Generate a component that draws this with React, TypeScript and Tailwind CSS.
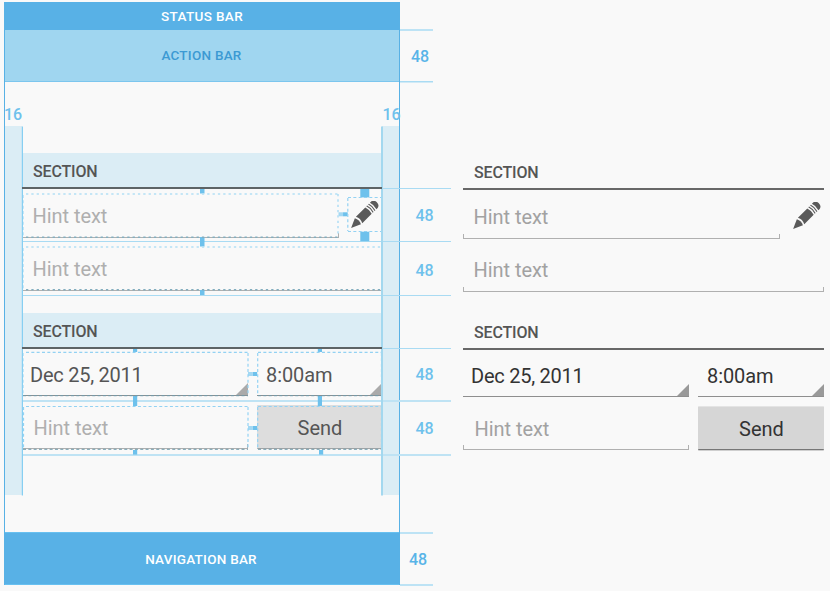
import React from "react";

type FormProps = { spec?: boolean };

function Pencil() {
  return (
    <svg width="28" height="28" viewBox="0 0 28 28" className="block shrink-0">
      <g transform="translate(0.1 27) rotate(-45)" fill="#5a5a5a">
        <path d="M0 0 L9.6 -4.3 Q12 0 9.6 4.3 Z" />
        <path d="M11.3 -4.5 H24.6 Q26.2 0 24.6 4.5 H11.3 Q13.6 0 11.3 -4.5 Z" />
        <path d="M26 -4.6 H27.2 Q28.8 0 27.2 4.6 H26 Q27.6 0 26 -4.6 Z" />
        <path d="M28.6 -4.6 H29.8 Q31.4 0 29.8 4.6 H28.6 Q30.2 0 28.6 -4.6 Z" />
        <path d="M31.2 -4.6 H33 Q36.4 -4 36.4 0 Q36.4 4 33 4.6 H31.2 Q32.8 0 31.2 -4.6 Z" />
      </g>
    </svg>
  );
}

function Header({ spec }: FormProps) {
  return (
    <div
      className={`h-[36px] shrink-0 border-b-2 flex items-center text-[16px] leading-[20px] font-medium tracking-[-0.15px] text-[#555] pl-[11px] pt-[4px] ${
        spec ? "bg-[#dbedf5] border-[#5d6466]" : "border-[#686868]"
      }`}
    >
      SECTION
    </div>
  );
}

function HintField({ spec, className }: FormProps & { className: string }) {
  return (
    <div className={`flex flex-col ${className}`}>
      <div className={`flex-1 text-[20px] leading-[24px] tracking-[-0.05px] ${spec ? "text-[#afafaf]" : "text-[#a2a2a2]"}`}>
        Hint text
      </div>
      <div className="h-[5px] border-x border-b border-[#b0b0b0]" />
    </div>
  );
}

function Spinner({ spec, className, children }: FormProps & { className: string; children: React.ReactNode }) {
  return (
    <div
      className={`flex justify-between items-end border-b pt-[14px] ${
        spec ? "text-[#555] border-[#8b8f91]" : "text-[#333] border-[#8e8e8e]"
      } ${className}`}
    >
      <span className="self-start text-[20px] leading-[24px]">{children}</span>
      <svg width="12" height="12" viewBox="0 0 12 12" className="block">
        <path d="M12 0 V12 H0 Z" fill={spec ? "#aaaaaa" : "#999999"} />
      </svg>
    </div>
  );
}

function Form({ spec }: FormProps) {
  return (
    <div className="w-full flex flex-col">
      <Header spec={spec} />
      <div className="flex justify-between h-[49px]">
        <HintField spec={spec} className="w-[317px] pt-[15px] [&>div:first-child]:pl-[10.5px]" />
        <div className="pt-[12px] pr-[3px]">
          <Pencil />
        </div>
      </div>
      <HintField spec={spec} className="h-[53px] pt-[19px] [&>div:first-child]:pl-[10.5px]" />
      <div className={spec ? "h-[22px]" : "h-[21.5px]"} />
      <Header spec={spec} />
      <div className={spec ? "flex gap-[9px] h-[47px]" : "flex gap-[9px] h-[47.5px]"}>
        <Spinner spec={spec} className="w-[226px] pl-[8px]">
          <span className="tracking-[-0.25px]">Dec 25, 2011</span>
        </Spinner>
        <Spinner spec={spec} className="flex-1 pl-[9px]">
          <span className="tracking-[-0.1px]">8:00am</span>
        </Spinner>
      </div>
      <div className="flex gap-[9px] h-[44px] mt-[9px]">
        <HintField spec={spec} className="w-[226px] pt-[11px] [&>div:first-child]:pl-[11.5px]" />
        <button
          className={`flex-1 flex items-center justify-center rounded-[1px] border-b border-t text-[20px] leading-[24px] pt-[2px] pl-[1px] ${
            spec
              ? "bg-[#dddddd] text-[#555] border-t-[#dddddd] border-b-[#a2a4a5]"
              : "bg-[#d6d6d6] text-[#333] border-t-[#e4e4e4] border-b-[#777777] shadow-[0_1px_0_#cfcfcf]"
          }`}
        >
          Send
        </button>
      </div>
    </div>
  );
}

function Guides() {
  const rows = [188.5, 241.5, 295.5, 348.5];
  const marks = [
    [200, 189, 4.5, 4.5], [200, 237, 4.5, 9.5], [200, 290, 4.5, 5],
    [360.3, 189, 9, 8.4], [360.3, 231.7, 9, 9.5],
    [133, 349, 4.2, 3], [133, 396, 4.2, 10], [133, 450, 4.2, 4.6],
    [317.8, 349, 4.2, 3], [317.8, 396, 4.2, 10], [319, 450, 4.2, 4.6],
    [343, 212.3, 4.7, 4], [252.5, 372, 4.7, 4], [252.5, 426, 4.7, 4],
  ];
  const light = [[338.5, 212.3], [248, 372], [248, 426]];
  return (
    <svg width="830" height="591" viewBox="0 0 830 591" className="absolute left-0 top-0 pointer-events-none">
      <g stroke="#a9dbf3" fill="none">
        {rows.map((y) => (
          <path key={y} d={`M${y === 188.5 || y === 348.5 ? 382 : 22} ${y}H451`} />
        ))}
        <path d="M22 401H451M22 455H451" stroke="#bfe3f4" strokeWidth="2" />
        <path d="M400 30H433M400 81.8H433M400 533H433M400 585H433" stroke="#a9dbf3" strokeWidth="1.5" />
      </g>
      <g fill="#6ec1ec">
        {marks.map(([x, y, w, h], i) => (
          <rect key={i} x={x} y={y} width={w} height={h} />
        ))}
      </g>
      <g fill="#a3d8f3">
        {light.map(([x, y], i) => (
          <rect key={i} x={x} y={y} width="4.6" height="4" />
        ))}
      </g>
      <g stroke="#b3dff5" fill="none" strokeWidth="1.6" strokeDasharray="2.3 3.03">
        <path d="M26 194H338M26 247H382M338 194V236" />
        <path d="M26 237.3H338M26 289.8H381" stroke="#83aebf" strokeWidth="1.4" />
      </g>
      <g stroke="#93d2f3" fill="none" strokeWidth="1.2" strokeDasharray="3 2.33">
        <path d="M348 197.5H381M348 231.5H381M347.8 198V231" />
        <path d="M26 352.4H248M26 406.5H248M258 352.4H382M258 406.5H382" />
        <path d="M248 353V395M248 407V449M257.7 353V395M257.7 407V449" />
        <path d="M22.9 195V237M22.9 248V289M22.9 353V395M23.5 407V449M381.5 353V395M381.5 407V449" />
        <path d="M23 395.7H248M258 395.7H382M23 449.3H248M258 449.3H382" stroke="#709cac" strokeWidth="1" />
      </g>
      <path d="M22.4 126.5V495.5" stroke="#87cff2" strokeWidth="1.2" />
      <path d="M382 126.5V495.5" stroke="#a3d8ef" strokeWidth="2" />
      <path d="M22 188H382M22 348H382" stroke="#5d6466" strokeWidth="2" />
    </svg>
  );
}

function Gutter({ right }: { right?: boolean }) {
  return (
    <div className="w-[17px] flex flex-col pt-[23px]">
      <div
        className={`h-[21px] w-[20px] text-[16px] leading-[20px] font-medium text-[#6ec1ec] ${
          right ? "ml-[0.5px]" : "-ml-[1px]"
        }`}
      >
        16
      </div>
      <div className="h-[369px] bg-[#dbedf5]" />
    </div>
  );
}

const dims = [
  { value: 48, className: "mt-[45px] pl-[11px] text-[#58b4e8]" },
  { value: 48, className: "mt-[139px] pl-[15.5px] text-[#6ec1ec]" },
  { value: 48, className: "mt-[35px] pl-[15.5px] text-[#6ec1ec]" },
  { value: 48, className: "mt-[84px] pl-[15.5px] text-[#6ec1ec]" },
  { value: 48, className: "mt-[34px] pl-[15.5px] text-[#6ec1ec]" },
  { value: 48, className: "mt-[111px] pl-[9px] text-[#58b4e8]" },
];

export default function App() {
  return (
    <div className="relative w-[830px] h-[591px] overflow-hidden bg-[#f9f9f9] pt-[2px] pl-[4px] flex items-start font-['Roboto',sans-serif]">
      <div className="w-[396px] h-[583px] shrink-0 flex flex-col border-x border-[#58b1e5]">
        <div className="h-[28px] shrink-0 bg-[#58b1e6] flex items-center justify-center pt-[1px] text-[13.5px] font-medium tracking-[0.35px] text-white">
          STATUS BAR
        </div>
        <div className="h-[52px] shrink-0 bg-[#a0d6f0] border-b border-[#7cc6ee] flex items-center justify-center pr-[1px] text-[13.5px] font-medium tracking-[0.25px] text-[#3c9ad3]">
          ACTION BAR
        </div>
        <div className="flex-1 flex items-start">
          <Gutter />
          <div className="w-[360px] pt-[71px]">
            <Form spec />
          </div>
          <Gutter right />
        </div>
        <div className="h-[53px] shrink-0 bg-[#58b1e6] border-y border-[#68c0f0] flex items-center justify-center pt-[2px] pr-[2px] text-[13.5px] font-medium tracking-[0.25px] text-white">
          NAVIGATION BAR
        </div>
      </div>
      <div className="w-[51px] shrink-0 flex flex-col text-[16px] leading-[20px] font-medium">
        {dims.map((d, i) => (
          <div key={i} className={d.className}>
            {d.value}
          </div>
        ))}
      </div>
      <div className="w-[361px] ml-[12px] mt-[152px] shrink-0">
        <Form />
      </div>
      <Guides />
    </div>
  );
}
